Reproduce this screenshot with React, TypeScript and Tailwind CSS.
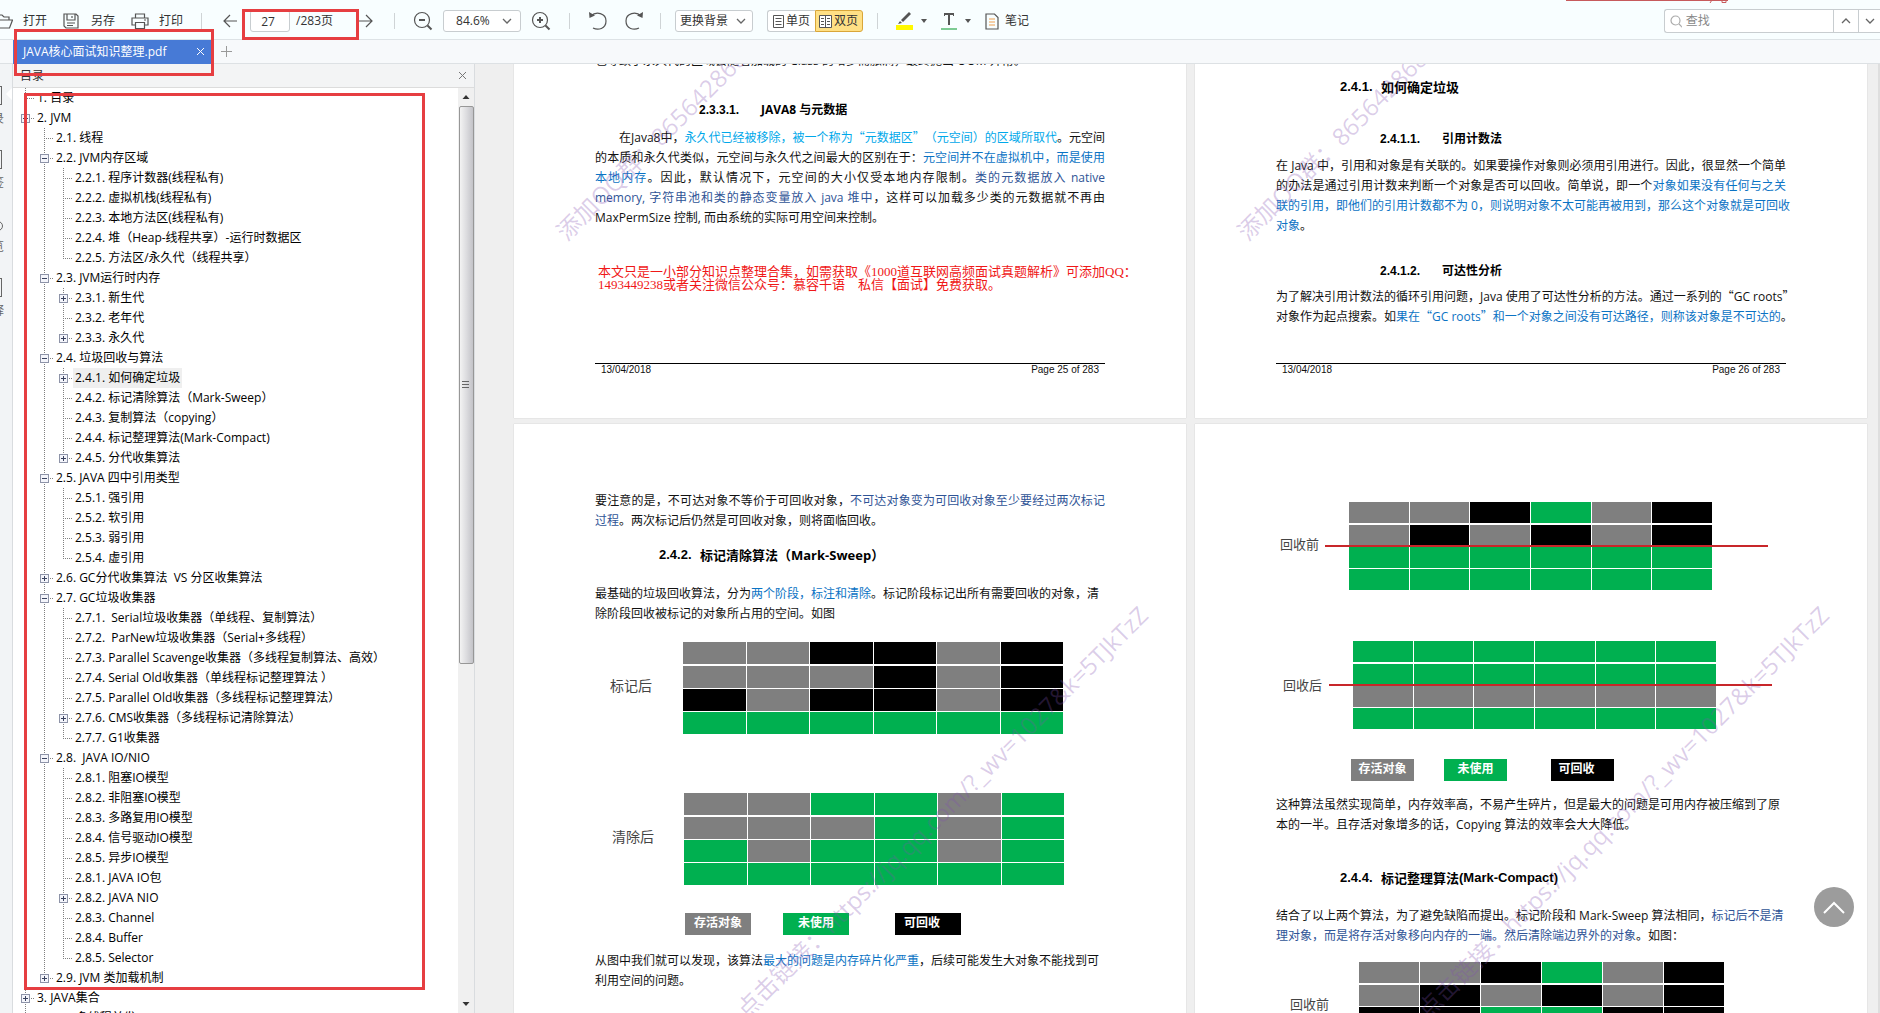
import { ReactNode } from "react";

type TreeItem = { level: number; label: string; box?: "plus" | "minus"; last?: boolean; active?: boolean };

const outline: TreeItem[] = [
  { level: 0, label: "1. 目录" },
  { level: 0, label: "2. JVM", box: "minus" },
  { level: 1, label: "2.1. 线程" },
  { level: 1, label: "2.2. JVM内存区域", box: "minus" },
  { level: 2, label: "2.2.1. 程序计数器(线程私有)" },
  { level: 2, label: "2.2.2. 虚拟机栈(线程私有)" },
  { level: 2, label: "2.2.3. 本地方法区(线程私有)" },
  { level: 2, label: "2.2.4. 堆（Heap-线程共享）-运行时数据区" },
  { level: 2, label: "2.2.5. 方法区/永久代（线程共享）", last: true },
  { level: 1, label: "2.3. JVM运行时内存", box: "minus" },
  { level: 2, label: "2.3.1. 新生代", box: "plus" },
  { level: 2, label: "2.3.2. 老年代" },
  { level: 2, label: "2.3.3. 永久代", box: "plus", last: true },
  { level: 1, label: "2.4. 垃圾回收与算法", box: "minus" },
  { level: 2, label: "2.4.1. 如何确定垃圾", box: "plus", active: true },
  { level: 2, label: "2.4.2. 标记清除算法（Mark-Sweep）" },
  { level: 2, label: "2.4.3. 复制算法（copying）" },
  { level: 2, label: "2.4.4. 标记整理算法(Mark-Compact)" },
  { level: 2, label: "2.4.5. 分代收集算法", box: "plus", last: true },
  { level: 1, label: "2.5. JAVA 四中引用类型", box: "minus" },
  { level: 2, label: "2.5.1. 强引用" },
  { level: 2, label: "2.5.2. 软引用" },
  { level: 2, label: "2.5.3. 弱引用" },
  { level: 2, label: "2.5.4. 虚引用", last: true },
  { level: 1, label: "2.6. GC分代收集算法  VS 分区收集算法", box: "plus" },
  { level: 1, label: "2.7. GC垃圾收集器", box: "minus" },
  { level: 2, label: "2.7.1.  Serial垃圾收集器（单线程、复制算法）" },
  { level: 2, label: "2.7.2.  ParNew垃圾收集器（Serial+多线程）" },
  { level: 2, label: "2.7.3. Parallel Scavenge收集器（多线程复制算法、高效）" },
  { level: 2, label: "2.7.4. Serial Old收集器（单线程标记整理算法 ）" },
  { level: 2, label: "2.7.5. Parallel Old收集器（多线程标记整理算法）" },
  { level: 2, label: "2.7.6. CMS收集器（多线程标记清除算法）", box: "plus" },
  { level: 2, label: "2.7.7. G1收集器", last: true },
  { level: 1, label: "2.8.  JAVA IO/NIO", box: "minus" },
  { level: 2, label: "2.8.1. 阻塞IO模型" },
  { level: 2, label: "2.8.2. 非阻塞IO模型" },
  { level: 2, label: "2.8.3. 多路复用IO模型" },
  { level: 2, label: "2.8.4. 信号驱动IO模型" },
  { level: 2, label: "2.8.5. 异步IO模型" },
  { level: 2, label: "2.8.1. JAVA IO包" },
  { level: 2, label: "2.8.2. JAVA NIO", box: "plus" },
  { level: 2, label: "2.8.3. Channel" },
  { level: 2, label: "2.8.4. Buffer" },
  { level: 2, label: "2.8.5. Selector", last: true },
  { level: 1, label: "2.9. JVM 类加载机制", box: "plus", last: true },
  { level: 0, label: "3. JAVA集合", box: "plus" },
  { level: 0, label: "4. JAVA多线程并发", box: "plus" },
];

const cellColors: Record<string, string> = {
  g: "bg-[#7f7f7f]",
  b: "bg-black",
  n: "bg-[#00b050]",
};

function Guide({ item, own }: { item: TreeItem; own: boolean }) {
  return (
    <svg width="19" height="20" className="shrink-0" shapeRendering="crispEdges">
      <path d={own && item.last ? "M9.5 0V11" : "M9.5 0V20"} stroke="#808080" strokeDasharray="1 1" />
      {own && <path d="M11 10.5H19" stroke="#808080" strokeDasharray="1 1" />}
      {own && item.box && (
        <>
          <rect x="5.5" y="6.5" width="8" height="8" fill="#f4f5fb" stroke="#8d93a8" />
          <path d={item.box === "plus" ? "M7 10.5H12M9.5 8V13" : "M7 10.5H12"} stroke="#39415e" />
        </>
      )}
    </svg>
  );
}

function Outline() {
  return (
    <div className="relative min-w-0 flex-1 overflow-hidden">
      <ul className="pl-[3px] text-xs text-black">
        {outline.map((item, i) => (
          <li key={i} className="flex h-5 whitespace-pre">
            {Array.from({ length: item.level + 1 }, (_, l) => (
              <Guide key={l} item={item} own={l === item.level} />
            ))}
            <button className={item.active ? "bg-[#efefef] px-0.5 leading-5" : "px-0.5 leading-5"}>{item.label}</button>
          </li>
        ))}
      </ul>
      <span className="pointer-events-none absolute top-[5px] right-[33px] left-[11px] h-[897px] border-3 border-[#e63e41]" />
    </div>
  );
}

function Separator({ className = "" }: { className?: string }) {
  return <span className={`h-4 w-px bg-[#cfd4d6] ${className}`} />;
}

function Chevron({ up = false }: { up?: boolean }) {
  return (
    <svg width="10" height="6" fill="none" stroke="#666" strokeWidth="1.3">
      <path d={up ? "M1 5L5 1L9 5" : "M1 1L5 5L9 1"} />
    </svg>
  );
}

function Caret() {
  return (
    <svg width="6" height="4" fill="#555">
      <path d="M0 0H6L3 4Z" />
    </svg>
  );
}

function Toolbar() {
  return (
    <header className="relative flex h-10 shrink-0 items-center border-b border-[#dde3e6] bg-[#f8feff] pt-[3px] text-xs text-[#333]">
      <button className="flex items-center gap-2.5">
        <svg width="13" height="18" fill="none" stroke="#555" strokeWidth="1.2">
          <path d="M0 3H2L4 5H9V8M0 8H12.5L9.5 16H0" />
        </svg>
        打开
      </button>
      <button className="ml-4 flex items-center gap-3">
        <svg width="16" height="16" fill="none" stroke="#555" strokeWidth="1.2">
          <path d="M1 1H13L15 3V15H3L1 13ZM4 1V7H12V1M9 3V5M4 10H12M4 12.5H10" />
        </svg>
        另存
      </button>
      <button className="ml-4 flex items-center gap-2.5">
        <svg width="18" height="16" fill="none" stroke="#555" strokeWidth="1.2">
          <path d="M4.5 5V1H13.5V5M4.5 12H1V5H17V12H13.5M4.5 9.5H13.5V15.5H4.5ZM13 7H15" />
        </svg>
        打印
      </button>
      <Separator className="ml-[18px]" />
      <button aria-label="上一页" className="ml-5">
        <svg width="16" height="14" fill="none" stroke="#555" strokeWidth="1.2">
          <path d="M15 7H2M8 1L2 7L8 13" />
        </svg>
      </button>
      <input
        aria-label="页码"
        defaultValue="27"
        className="ml-3 h-[22px] w-10 rounded-[3px] border border-[#c8cdd0] bg-white pr-1 text-center"
      />
      <span className="ml-1.5 w-[60px]">/283页</span>
      <button aria-label="下一页" className="ml-0.5">
        <svg width="16" height="14" fill="none" stroke="#555" strokeWidth="1.2">
          <path d="M1 7H14M8 1L14 7L8 13" />
        </svg>
      </button>
      <Separator className="ml-5" />
      <button aria-label="缩小" className="ml-[18px]">
        <svg width="20" height="20" fill="none" stroke="#555" strokeWidth="1.2">
          <circle cx="9" cy="9" r="7.5" />
          <path d="M6 9H12" strokeWidth="2" />
          <path d="M14.5 14.5L18.5 18.5" strokeWidth="2" />
        </svg>
      </button>
      <button className="ml-2.5 flex h-[22px] w-[78px] items-center justify-between rounded-[3px] border border-[#c8cdd0] bg-white pr-2 pl-3">
        84.6%
        <Chevron />
      </button>
      <button aria-label="放大" className="ml-2.5">
        <svg width="20" height="20" fill="none" stroke="#555" strokeWidth="1.2">
          <circle cx="9" cy="9" r="7.5" />
          <path d="M6 9H12M9 6V12" strokeWidth="2" />
          <path d="M14.5 14.5L18.5 18.5" strokeWidth="2" />
        </svg>
      </button>
      <Separator className="ml-[18px]" />
      <button aria-label="撤销" className="ml-[18px]">
        <svg width="20" height="20" fill="none" stroke="#555" strokeWidth="1.2">
          <path d="M3 5C8 0 18 2 18 10S10 19.5 5 17" />
          <path d="M1 1L1.5 7L7 4.5Z" fill="#555" stroke="none" />
        </svg>
      </button>
      <button aria-label="重做" className="ml-4">
        <svg width="20" height="20" fill="none" stroke="#555" strokeWidth="1.2">
          <path d="M17 5C12 0 2 2 2 10S10 19.5 15 17" />
          <path d="M19 1L18.5 7L13 4.5Z" fill="#555" stroke="none" />
        </svg>
      </button>
      <Separator className="ml-4" />
      <button className="ml-[14px] flex h-[22px] w-[78px] items-center justify-between rounded-[3px] border border-[#c8cdd0] bg-white pr-1.5 pl-1">
        更换背景
        <Chevron />
      </button>
      <div className="ml-[14px] flex h-[22px]">
        <button className="flex w-12 items-center gap-0.5 rounded-l-[3px] border border-r-0 border-[#c8cdd0] bg-white pl-[5px]">
          <svg width="11" height="13" fill="none" stroke="#555">
            <path d="M0.5 0.5H10.5V12.5H0.5ZM2.5 3.5H8.5M2.5 6.5H8.5M2.5 9.5H8.5" />
          </svg>
          单页
        </button>
        <button className="flex w-12 items-center gap-0.5 rounded-r-[3px] border border-[#d9a63a] bg-[#ffe085] pl-[3px]">
          <svg width="13" height="13" fill="#fff" stroke="#555">
            <path d="M0.5 0.5H12.5V12.5H0.5ZM6.5 0.5V12.5M2 3.5H5M2 6.5H5M2 9.5H5M8 3.5H11M8 6.5H11M8 9.5H11" />
          </svg>
          双页
        </button>
      </div>
      <Separator className="ml-[14px]" />
      <button aria-label="高亮" className="ml-[18px] flex items-center gap-2">
        <svg width="17" height="20">
          <path d="M0 14H17V19H0Z" fill="#fff800" />
          <path d="M13 1L15 3L7 11L5 9ZM4 10L6 12L2 13Z" fill="#555" />
        </svg>
        <Caret />
      </button>
      <button aria-label="下划线" className="ml-[14px] flex items-center gap-2">
        <svg width="16" height="20">
          <path d="M3 2H13V5H12V4H9V14H7V4H4V5H3Z" fill="#555" />
          <path d="M0 17H16V19H0Z" fill="#7dcb93" />
        </svg>
        <Caret />
      </button>
      <button className="ml-[14px] flex items-center gap-1.5">
        <svg width="14" height="17" fill="none" stroke="#555" strokeWidth="1.2">
          <path d="M1 1H9.5L13 4.5V16H1Z" />
          <path d="M4 6H10M4 9H10M4 12H10" stroke="#f0a050" />
        </svg>
        笔记
      </button>

      <div className="ml-auto flex h-6 w-[216px] rounded-l-[3px] border border-r-0 border-[#c8cdd0] bg-white">
        <label className="flex flex-1 items-center gap-1 pl-[5px]">
          <svg width="13" height="13" fill="none" stroke="#aaa" strokeWidth="1.2">
            <circle cx="5.5" cy="5.5" r="4.5" />
            <path d="M9 9L12.5 12.5" />
          </svg>
          <input aria-label="查找" placeholder="查找" className="w-full outline-none placeholder:text-[#888]" />
        </label>
        <button aria-label="上一个" className="flex w-[25px] items-center justify-center border-l border-[#c8cdd0]">
          <Chevron up />
        </button>
        <button aria-label="下一个" className="flex w-[22px] items-center justify-center border-l border-[#c8cdd0]">
          <Chevron />
        </button>
      </div>

      <svg className="absolute top-0 right-[152px]" width="162" height="3">
        <path d="M0 0H162V1H0Z" fill="#c75a5c" />
        <path d="M146 0L144 3M156 1V2.5H160V1" stroke="#c75a5c" fill="none" />
      </svg>
      <span className="pointer-events-none absolute top-[9px] left-[242px] h-[31px] w-[117px] border-3 border-[#e63e41]" />
    </header>
  );
}

function Tabs() {
  return (
    <nav className="relative flex h-6 shrink-0 items-center border-b border-[#dde1e4] bg-[#f7f9fb] pl-[13px] text-xs">
      <div className="flex h-6 w-[198px] items-center justify-between bg-[#477ad6] pr-1.5 pl-2.5 text-white">
        <a href="#doc">JAVA核心面试知识整理.pdf</a>
        <button aria-label="关闭标签">
          <svg width="9" height="9" stroke="#fff">
            <path d="M1 1L8 8M8 1L1 8" />
          </svg>
        </button>
      </div>
      <button aria-label="新建标签" className="ml-2.5">
        <svg width="11" height="11" stroke="#999">
          <path d="M0 5.5H11M5.5 0V11" />
        </svg>
      </button>
      <span className="pointer-events-none absolute -top-[11px] left-[14px] z-10 h-[47px] w-[200px] border-3 border-[#e63e41]" />
    </nav>
  );
}

function SideRail() {
  const items = ["目录", "书签", "预览", "注释"];
  return (
    <div className="relative flex w-[13px] shrink-0 flex-col items-end gap-[19px] overflow-hidden border-r border-[#d9dcdf] bg-[#f2f4f6] pt-5 pr-2 text-xs text-[#666]">
      {items.map((name, i) => (
        <button key={name} className="flex flex-col items-end whitespace-nowrap">
          <svg width="18" height="25" fill="none" stroke="#666">
            {i === 2 ? <circle cx="12" cy="14" r="4.5" /> : <rect x="2.5" y="2.5" width="13" height="18" />}
          </svg>
          <span className="leading-5">{name}</span>
        </button>
      ))}
      <svg className="absolute top-6 right-0" width="6" height="12" fill="#fff">
        <path d="M6 0L0 6L6 12Z" />
      </svg>
    </div>
  );
}

function Sidebar() {
  return (
    <aside className="flex w-[475px] shrink-0">
      <SideRail />
      <div className="flex min-w-0 flex-1 flex-col border-r border-[#d9dcdf] bg-white">
        <div className="flex h-6 shrink-0 items-center justify-between border-b border-[#dcdcdc] bg-[#f3f4f5] px-[7px] text-xs text-[#333]">
          目录
          <button aria-label="关闭目录">
            <svg width="9" height="9" stroke="#777">
              <path d="M1 1L8 8M8 1L1 8" />
            </svg>
          </button>
        </div>
        <div className="flex min-h-0 flex-1">
          <Outline />
          <div className="flex w-4 shrink-0 flex-col items-center bg-[#f0f0f0]">
            <svg width="16" height="18" fill="#333" className="shrink-0">
              <path d="M4.5 11L8 7L11.5 11Z" />
            </svg>
            <div className="flex h-[558px] w-[15px] items-center justify-center rounded-[2px] border border-[#979797] bg-linear-to-r from-[#f3f3f3] via-[#dcdcdf] to-[#c3c3c8]">
              <svg width="8" height="8" stroke="#666">
                <path d="M0 0.5H7M0 3.5H7M0 6.5H7" />
              </svg>
            </div>
            <svg width="16" height="18" fill="#333" className="mt-auto shrink-0">
              <path d="M4.5 7L8 11L11.5 7Z" />
            </svg>
          </div>
        </div>
      </div>
    </aside>
  );
}

function Page({ children, className = "" }: { children: ReactNode; className?: string }) {
  return (
    <article
      className={`relative flex flex-col overflow-hidden bg-white px-[81px] text-xs leading-5 text-[#111] shadow-[0_0_1px_#bbb] ${className}`}
    >
      {children}
    </article>
  );
}

function Footer({ page }: { page: number }) {
  return (
    <footer className="mt-auto flex justify-between border-t border-black px-1.5 font-['Liberation_Sans'] text-[10px] leading-3">
      <span>13/04/2018</span>
      <span>Page {page} of 283</span>
    </footer>
  );
}

function SubHeading({ no, children, className }: { no: string; children: ReactNode; className: string }) {
  return (
    <h3 className={`flex pl-[104px] font-bold text-black ${className}`}>
      <span className="w-[62px] font-['Liberation_Sans']">{no}</span>
      {children}
    </h3>
  );
}

function Heading({ no, children, className = "" }: { no: string; children: ReactNode; className?: string }) {
  return (
    <h2 className={`flex pl-16 text-[13px] leading-5 font-bold text-black ${className}`}>
      <span className="w-[41px] font-['Liberation_Sans']">{no}</span>
      {children}
    </h2>
  );
}

// A typeset line that fills the whole measure
function Line({ children, className = "" }: { children: ReactNode; className?: string }) {
  return <span className={`block whitespace-nowrap [text-align-last:justify] ${className}`}>{children}</span>;
}

// One letter per cell: g = live, b = collectable, n = unused
function MemoryRows({ rows, cell, className = "" }: { rows: string[]; cell: string; className?: string }) {
  return (
    <div className={`flex flex-col gap-px ${className}`}>
      {rows.map((row, i) => (
        <div key={i} className={`grid grid-cols-6 gap-px ${i === 0 ? "mb-px" : ""}`}>
          {row.split("").map((c, j) => (
            <span key={j} className={`${cell} ${cellColors[c]}`} />
          ))}
        </div>
      ))}
    </div>
  );
}

function RedLine() {
  return <span className="absolute top-[43px] -right-14 -left-6 h-0.5 bg-[#c8262a]" />;
}

function Legend({ className, box, gapA, gapB }: { className: string; box: string; gapA: string; gapB: string }) {
  return (
    <div className={`flex text-center font-bold text-white ${className}`}>
      <span className={`bg-[#7f7f7f] ${box}`}>存活对象</span>
      <span className={`bg-[#00b050] ${box} ${gapA}`}>未使用</span>
      <span className={`bg-black pr-3 ${box} ${gapB}`}>可回收</span>
    </div>
  );
}

function Watermark({ children, className }: { children: ReactNode; className: string }) {
  return (
    <span
      className={`pointer-events-none absolute origin-bottom-left -rotate-45 text-2xl leading-6 whitespace-nowrap text-[#7f50b0]/28 ${className}`}
    >
      {children}
    </span>
  );
}

function Blue({ children }: { children: ReactNode }) {
  return <span className="text-[#0b73c4]">{children}</span>;
}

function Navy({ children }: { children: ReactNode }) {
  return <span className="text-[#2f5496]">{children}</span>;
}

function Cyan({ children }: { children: ReactNode }) {
  return <span className="text-[#00a8ea]">{children}</span>;
}

// Quotation marks take a full character cell
function Quote({ children }: { children: ReactNode }) {
  return (
    <>
      <span className="font-['Noto_Sans_CJK_SC',sans-serif] leading-none">“</span>
      {children}
      <span className="font-['Noto_Sans_CJK_SC',sans-serif] leading-none">”</span>
    </>
  );
}

function Document() {
  return (
    <main
      id="doc"
      className="relative min-w-0 flex-1 overflow-hidden border-r-2 border-[#dedede] bg-[#efefef] pr-[11px] pl-[39px] [text-spacing-trim:space-all]"
    >
      <div className="grid grid-cols-2 gap-x-[9px] gap-y-1.5">
        <Page className="min-h-[354px] pb-[42px]">
          <p className="-mt-[13px]">也导致了永久代的区域会随着加载的 Class 的增多而胀满，最终抛出 OOM 异常。</p>
          <SubHeading no="2.3.3.1." className="mt-[29px]">
            JAVA8 与元数据
          </SubHeading>
          <p className="mt-2">
            <Line className="pl-6">
              在Java8中，
              <Cyan>
                永久代已经被移除，被一个称为<Quote>元数据区</Quote>（元空间）的区域所取代
              </Cyan>
              。元空间
            </Line>
            <Line>
              的本质和永久代类似，元空间与永久代之间最大的区别在于：<Blue>元空间并不在虚拟机中，而是使用</Blue>
            </Line>
            <Line>
              <Blue>本地内存</Blue>。因此，默认情况下，元空间的大小仅受本地内存限制。<Navy>类的元数据放入 native</Navy>
            </Line>
            <Line>
              <Navy>memory, 字符串池和类的静态变量放入 java 堆中</Navy>，这样可以加载多少类的元数据就不再由
            </Line>
            MaxPermSize 控制, 而由系统的实际可用空间来控制。
          </p>
          <p className="mt-[37px] pl-[3px] font-['Liberation_Serif','Noto_Sans_CJK_SC',serif] text-[13px] leading-[13px] whitespace-nowrap text-[#f01818]">
            本文只是一小部分知识点整理合集，如需获取《1000道互联网高频面试真题解析》可添加QQ：
            <br />
            1493449238或者关注微信公众号：慕容千语　私信【面试】免费获取。
          </p>
          <Footer page={25} />
          <Watermark className="top-[156px] left-[55px]">添加QQ群：865642868</Watermark>
        </Page>

        <Page className="pt-[13px] pb-[42px]">
          <Heading no="2.4.1.">如何确定垃圾</Heading>
          <SubHeading no="2.4.1.1." className="mt-8">
            引用计数法
          </SubHeading>
          <p className="mt-[7px]">
            <Line>在 Java 中，引用和对象是有关联的。如果要操作对象则必须用引用进行。因此，很显然一个简单</Line>
            <Line>
              的办法是通过引用计数来判断一个对象是否可以回收。简单说，即一个<Blue>对象如果没有任何与之关</Blue>
            </Line>
            <Line>
              <Blue>联的引用，即他们的引用计数都不为 0，则说明对象不太可能再被用到，那么这个对象就是可回收</Blue>
            </Line>
            <Blue>对象</Blue>。
          </p>
          <SubHeading no="2.4.1.2." className="mt-[25px]">
            可达性分析
          </SubHeading>
          <p className="mt-1.5 -mr-1.5">
            <Line>
              为了解决引用计数法的循环引用问题，Java 使用了可达性分析的方法。通过一系列的<Quote>GC roots</Quote>
            </Line>
            <Line>
              对象作为起点搜索。如
              <Blue>
                果在<Quote>GC roots</Quote>和一个对象之间没有可达路径，则称该对象是不可达的
              </Blue>
              。
            </Line>
          </p>
          <Footer page={26} />
          <Watermark className="top-[156px] left-[55px]">添加QQ群：865642868</Watermark>
        </Page>

        <Page className="min-h-[900px] pt-[67px]">
          <p>
            <Line>
              要注意的是，不可达对象不等价于可回收对象，<Navy>不可达对象变为可回收对象至少要经过两次标记</Navy>
            </Line>
            <Navy>过程</Navy>。两次标记后仍然是可回收对象，则将面临回收。
          </p>
          <Heading no="2.4.2." className="mt-[14px]">
            标记清除算法（Mark-Sweep）
          </Heading>
          <p className="mt-[19px]">
            最基础的垃圾回收算法，分为<Blue>两个阶段，标注和清除</Blue>
            。标记阶段标记出所有需要回收的对象，清除阶段回收被标记的对象所占用的空间。如图
          </p>
          <figure className="mt-[18px] flex items-center">
            <figcaption className="w-[88px] pb-1 pl-[15px] text-sm text-[#444]">标记后</figcaption>
            <MemoryRows className="w-[380px]" cell="h-[22px]" rows={["ggbbgb", "gggbgb", "bgbbgb", "nnnnnn"]} />
          </figure>
          <figure className="mt-[59px] flex items-center">
            <figcaption className="w-[89px] pb-1 pl-[17px] text-sm text-[#444]">清除后</figcaption>
            <MemoryRows className="w-[380px]" cell="h-[22px]" rows={["ggnngn", "gggngn", "ngnngn", "nnnnnn"]} />
          </figure>
          <Legend className="mt-7 pl-[90px]" box="h-[22px] w-[66px]" gapA="ml-8" gapB="ml-[46px]" />
          <p className="mt-4">
            从图中我们就可以发现，该算法<Blue>最大的问题是内存碎片化严重</Blue>，后续可能发生大对象不能找到可利用空间的问题。
          </p>
          <Watermark className="top-[574px] left-[235px]">点击链接：https://jq.qq.com/?_wv=1027&amp;k=5TJkTzZ</Watermark>
        </Page>

        <Page className="pt-[78px]">
          <figure className="flex items-center">
            <figcaption className="w-[73px] pb-1 pl-1 text-[13px] text-[#444]">回收前</figcaption>
            <div className="relative w-[363px]">
              <MemoryRows cell="h-[21px]" rows={["ggbngb", "gbgbgb", "nnnnnn", "nnnnnn"]} />
              <RedLine />
            </div>
          </figure>
          <figure className="mt-[51px] flex items-center">
            <figcaption className="w-[77px] pl-[7px] text-[13px] text-[#444]">回收后</figcaption>
            <div className="relative w-[363px]">
              <MemoryRows cell="h-[21px]" rows={["nnnnnn", "nnnnnn", "gggggg", "nnnnnn"]} />
              <RedLine />
            </div>
          </figure>
          <Legend className="mt-[30px] pl-[75px]" box="h-[22px] w-[63px]" gapA="ml-[30px]" gapB="ml-[44px]" />
          <p className="mt-[14px]">
            这种算法虽然实现简单，内存效率高，不易产生碎片，但是最大的问题是可用内存被压缩到了原本的一半。且存活对象增多的话，Copying
            算法的效率会大大降低。
          </p>
          <Heading no="2.4.4." className="mt-[33px]">
            标记整理算法
            <span className="font-['Liberation_Sans']">(Mark-Compact)</span>
          </Heading>
          <p className="mt-[18px]">
            结合了以上两个算法，为了避免缺陷而提出。标记阶段和 Mark-Sweep 算法相同，
            <Navy>标记后不是清理对象，而是将存活对象移向内存的一端。然后清除端边界外的对象</Navy>。如图：
          </p>
          <figure className="mt-4 flex items-center">
            <figcaption className="w-[83px] pb-1 pl-[14px] text-[13px] text-[#444]">回收前</figcaption>
            <MemoryRows className="w-[365px]" cell="h-[21px]" rows={["ggbngb", "gbgbgb", "bbnnbb", "nnnnnn"]} />
          </figure>
          <Watermark className="top-[574px] left-[235px]">点击链接：https://jq.qq.com/?_wv=1027&amp;k=5TJkTzZ</Watermark>
        </Page>
      </div>
      <button
        aria-label="回到顶部"
        className="absolute right-6 bottom-[86px] flex size-10 items-center justify-center rounded-full bg-[#9c9c9c]"
      >
        <svg width="22" height="13" fill="none" stroke="#fff" strokeWidth="2">
          <path d="M1 12L11 2L21 12" />
        </svg>
      </button>
    </main>
  );
}

export default function App() {
  return (
    <div className="flex h-screen flex-col overflow-hidden font-['Open_Sans','Noto_Sans_CJK_SC',sans-serif]">
      <Toolbar />
      <Tabs />
      <div className="flex min-h-0 flex-1">
        <Sidebar />
        <Document />
      </div>
    </div>
  );
}
